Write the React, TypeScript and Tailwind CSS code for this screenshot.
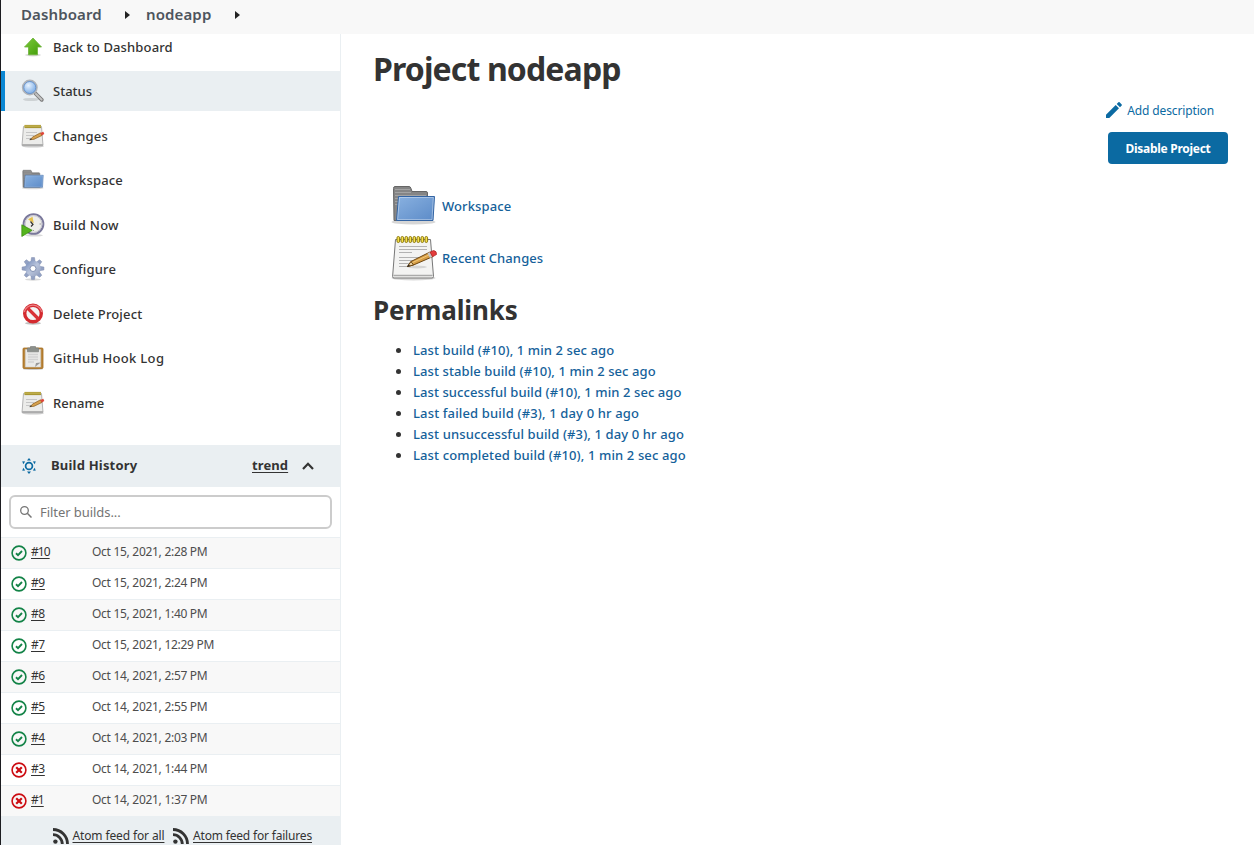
import React from "react";

type IconProps = { className?: string };

function UpArrow() {
  return (
    <svg width="24" height="24" viewBox="0 0 24 24">
      <defs>
        <linearGradient id="upg" x1="0" y1="0" x2="1" y2="1"><stop offset="0" stopColor="#7dcb3c" /><stop offset="1" stopColor="#3f9a06" /></linearGradient>
      </defs>
      <ellipse cx="12" cy="20" rx="8" ry="1.500" fill="#000" opacity=".14" />
      <path d="M12 3 20.500 12H16.500V19.800H7.500V12H3.500Z" fill="url(#upg)" stroke="#6db33a" strokeWidth=".8" />
    </svg>
  );
}

function Magnifier() {
  return (
    <svg width="24" height="24" viewBox="0 0 24 24">
      <defs><radialGradient id="lens" cx=".4" cy=".35"><stop offset="0" stopColor="#e8f3ff" /><stop offset="1" stopColor="#8fb9ea" /></radialGradient></defs>
      <ellipse cx="10" cy="20.500" rx="8" ry="1.600" fill="#000" opacity=".12" />
      <path d="M14.500 14.500 20.800 20.800" stroke="#7b7b7b" strokeWidth="3.800" strokeLinecap="round" />
      <path d="M15 15 20.600 20.600" stroke="#c4c4c4" strokeWidth="2" strokeLinecap="round" />
      <circle cx="8.800" cy="8.500" r="7" fill="url(#lens)" stroke="#b0b3b8" strokeWidth="1.900" />
      <circle cx="8.800" cy="8.500" r="6" fill="none" stroke="#5d8fce" strokeWidth=".9" />
    </svg>
  );
}

function Notepad({ size = 24 }: { size?: number }) {
  const small = size < 30;
  return small ? (
    <svg width="24" height="24" viewBox="0 0 24 24">
      <ellipse cx="12" cy="22.300" rx="11" ry="1.200" fill="#000" opacity=".2" />
      <path d="M2.500 2.500H20.500L22 21.500H1Z" fill="#ececea" stroke="#b4b4b4" />
      <path d="M1.200 20.800H21.800" stroke="#999" />
      <path d="M3.500 2.500H20" stroke="#a18e2b" strokeWidth="3.200" />
      <path d="M3.500 2.300H20" stroke="#d9ca68" strokeWidth="2" strokeDasharray="1 1" />
      <path d="M5 8.500H16M5 11.500H13M5 14.500H10" stroke="#c6c6c6" />
      <path d="M9 15.700 12 12.800 19.500 8.800 21 11.400 13 15.300Z" fill="#d6a04c" stroke="#875b1e" strokeWidth=".7" />
      <path d="M19.200 8.900 22.300 7.700 23.300 10 20.800 11.500Z" fill="#de4539" />
      <path d="M8 16.200 11 15.200 10 14.200Z" fill="#333" />
    </svg>
  ) : (
    <svg width="48" height="48" viewBox="0 0 48 48">
      <ellipse cx="23.500" cy="44" rx="22" ry="2.500" fill="#000" opacity=".15" />
      <path d="M5.500 5.500H40.500L43.500 42.500Q43.500 44 42 44H4Q2.500 44 2.600 42.500Z" fill="#f3f3f2" stroke="#777" />
      <path d="M3.500 41.500H42.500" stroke="#aaa" strokeWidth="1.500" />
      <path d="M9 12.500H37M9 15.500H37M9 18.500H22M9 23.500H35M9 26.500H28M9 29.500H23M9 32.500H18" stroke="#b2b2b2" />
      {[8.500, 12.500, 16.500, 20.500, 24.500, 28.500, 32.500, 36.500].map((x) => (
        <rect key={x} x={x - 1.500} y="2.500" width="2.600" height="6" rx="1.300" fill="#f7e04a" stroke="#8c7a10" />
      ))}
      <ellipse cx="27" cy="33" rx="10" ry="1.500" fill="#000" opacity=".12" />
      <path d="M17.500 32.500 21 27.500 40 18 43 22.500 23.500 31Z" fill="#d79e45" stroke="#6d4610" />
      <path d="M21.500 29 41 20" stroke="#f0c879" />
      <path d="M17.500 32.500 21 27.500 23.500 31Z" fill="#eed3a4" stroke="#6d4610" />
      <path d="M17 33 18.700 30.500 20 32Z" fill="#222" />
      <path d="M37.500 19.200 40 18 42.500 22.800 40 24Z" fill="#c7c7c7" />
      <path d="M40 18 43.500 16.500Q47 17 46.500 20.500L42.500 22.800Z" fill="#e33c3c" stroke="#a22" strokeWidth=".7" />
    </svg>
  );
}

function Folder({ size = 24 }: { size?: number }) {
  return (
    <svg width={size} height={size} viewBox="0 0 48 48">
      <defs><linearGradient id="fold" x1="0" y1="0" x2="1" y2="1"><stop offset="0" stopColor="#89b1e0" /><stop offset="1" stopColor="#5c8bc8" /></linearGradient></defs>
      <ellipse cx="23.500" cy="40" rx="22" ry="2.500" fill="#000" opacity=".16" />
      <path d="M3.500 6.500Q3.500 4.500 5 4.500H19Q20.500 4.500 21 6.500L22 9.500H36Q37.500 9.500 37.500 11V38.500H4Z" fill="#858585" stroke="#666" />
      <path d="M5 7.500H20M5 10.500H21M5 13.500H36M5 16.500H8M5 19.500H8M5 22.500H8" stroke="#a3a3a3" />
      <path d="M8.500 14.500H44.500L43 38.500H6.500Z" fill="url(#fold)" stroke="#3465a4" />
      <path d="M9.500 15.500H43.300L42 37.500H7.600Z" fill="none" stroke="#fff" opacity=".35" />
    </svg>
  );
}

function BuildClock() {
  return (
    <svg width="24" height="24" viewBox="0 0 24 24">
      <ellipse cx="13" cy="22.300" rx="9" ry="1.200" fill="#000" opacity=".15" />
      <circle cx="12.500" cy="11" r="9.900" fill="#eeeeea" stroke="#7a789b" strokeWidth="1.900" />
      <circle cx="12.500" cy="11" r="8.400" fill="none" stroke="#c4c4ce" />
      <path d="M12.800 10.500 7 6.200 11.500 3.800Z" fill="#e6c14c" />
      <path d="M9.500 8.500 12 11.500 10 13.500" stroke="#333" strokeWidth="1.200" fill="none" />
      <path d="M20 11H18.500M12.500 18V17" stroke="#999" />
      <path d="M.8 11.800 11.200 17.300.8 23.500Z" fill="#54b41e" stroke="#378808" strokeWidth=".7" />
    </svg>
  );
}

function Gear() {
  return (
    <svg width="24" height="24" viewBox="0 0 24 24">
      <defs><linearGradient id="gear" x1="0" y1="0" x2="1" y2="1"><stop offset="0" stopColor="#7189b8" /><stop offset=".5" stopColor="#b9c4dc" /><stop offset="1" stopColor="#8f9cbb" /></linearGradient></defs>
      <ellipse cx="12" cy="22.500" rx="8" ry="1.200" fill="#000" opacity=".15" />
      <g fill="url(#gear)">
        {[0, 45, 90, 135, 180, 225, 270, 315].map((a) => (
          <path key={a} d="M9.800 5.500 10.500.6H13.500L14.200 5.500Z" fill="#93a2c4" stroke="#7c89ac" strokeWidth=".5" transform={`rotate(${a} 12 11.500)`} />
        ))}
        <circle cx="12" cy="11.500" r="7.800" />
      </g>
      <circle cx="12" cy="11.500" r="3" fill="#fff" stroke="#8290b2" />
    </svg>
  );
}

function NoEntry() {
  return (
    <svg width="24" height="24" viewBox="0 0 24 24">
      <ellipse cx="12" cy="21.300" rx="8" ry="1.500" fill="#000" opacity=".25" />
      <circle cx="12" cy="11.500" r="8.300" fill="#f4f4f4" stroke="#d42a2f" strokeWidth="3.400" />
      <path d="M6.500 6 17.500 17" stroke="#d93237" strokeWidth="3.200" />
      <path d="M3.400 10A8.800 8.800 0 0 1 20.600 10" fill="none" stroke="#ec8185" strokeWidth="1.200" />
    </svg>
  );
}

function Clipboard() {
  return (
    <svg width="24" height="24" viewBox="0 0 24 24">
      <ellipse cx="12" cy="23" rx="10" ry="1" fill="#000" opacity=".2" />
      <rect x="2" y="2" width="20" height="20.500" rx="1" fill="#b98438" stroke="#a36d20" strokeWidth=".8" />
      <path d="M4.300 3.500H19.700V21H4.300Z" fill="#eaeae8" stroke="#ccc" strokeWidth=".5" />
      <path d="M7 8.500H17M7 11H17M7 13.500H17M7 16H13" stroke="#d2d2d2" strokeWidth="1.300" />
      <path d="M14 21 15 17 19.700 16.500Z" fill="#999" />
      <path d="M6.500 2H9.500V.5H14.500V2H17.500V5.800H6.500Z" fill="#8c908c" stroke="#737773" strokeWidth=".6" />
    </svg>
  );
}

function Weather() {
  return (
    <svg width="16" height="16" viewBox="0 0 16 16" fill="none" stroke="#0b6aa2">
      <circle cx="8" cy="8" r="3.400" strokeWidth="1.700" />
      <path d="M8 0 10 2.500H6ZM8 16 10 13.500H6ZM1.300 3.200 4.200 3.500 2.200 6.200ZM14.700 3.200 11.800 3.500 13.800 6.200ZM1.300 12.800 4.200 12.500 2.200 9.800ZM14.700 12.800 11.800 12.500 13.800 9.800Z" fill="#0b6aa2" stroke="none" />
    </svg>
  );
}

function StatusIcon({ ok }: { ok: boolean }) {
  const c = ok ? "#138347" : "#cc0c12";
  return (
    <svg className="shrink-0" width="16" height="16" viewBox="0 0 16 16" fill="none" stroke={c}>
      <circle cx="8" cy="8" r="6.900" strokeWidth="1.600" />
      {ok ? <path d="M5 8.200 7 10.100 11 6" strokeWidth="1.900" /> : <path d="M5.200 5.200 10.800 10.800M10.800 5.200 5.200 10.800" strokeWidth="2.200" />}
    </svg>
  );
}

function Rss() {
  return (
    <svg className="shrink-0" width="16" height="16" viewBox="0 0 16 16" fill="none" stroke="#333">
      <circle cx="2.400" cy="13.600" r="2.200" fill="#333" stroke="none" />
      <path d="M0 6.700A9.300 9.300 0 0 1 9.300 16M0 1.500A14.500 14.500 0 0 1 14.500 16" strokeWidth="2.800" />
    </svg>
  );
}

function Pencil({ className }: IconProps) {
  return (
    <svg className={className} width="16" height="16" viewBox="0 0 16 16" fill="#0b6aa2">
      <path d="M0 12.700V16H3.300L13 6.300 9.700 3ZM15.700 3.600Q16.200 3 15.700 2.400L13.600.3Q13 -.2 12.400.3L10.700 2 14 5.300Z" />
    </svg>
  );
}

const tasks: [string, React.ReactNode, string][] = [
  ["Back to Dashboard", <UpArrow />, "tracking-[0.14px]"],
  ["Status", <Magnifier />, "tracking-[0px]"],
  ["Changes", <Notepad />, "tracking-[0.15px]"],
  ["Workspace", <Folder />, "tracking-[0.18px]"],
  ["Build Now", <BuildClock />, "tracking-[0.28px]"],
  ["Configure", <Gear />, "tracking-[0.2px]"],
  ["Delete Project", <NoEntry />, "tracking-[0.15px]"],
  ["GitHub Hook Log", <Clipboard />, "tracking-[0.32px]"],
  ["Rename", <Notepad />, "tracking-[0.05px]"],
];

const builds: [string, string, boolean][] = [
  ["#10", "Oct 15, 2021, 2:28 PM", true],
  ["#9", "Oct 15, 2021, 2:24 PM", true],
  ["#8", "Oct 15, 2021, 1:40 PM", true],
  ["#7", "Oct 15, 2021, 12:29 PM", true],
  ["#6", "Oct 14, 2021, 2:57 PM", true],
  ["#5", "Oct 14, 2021, 2:55 PM", true],
  ["#4", "Oct 14, 2021, 2:03 PM", true],
  ["#3", "Oct 14, 2021, 1:44 PM", false],
  ["#1", "Oct 14, 2021, 1:37 PM", false],
];

const permalinks: [string, string][] = [
  ["Last build (#10), 1 min 2 sec ago", "tracking-[0.1px]"],
  ["Last stable build (#10), 1 min 2 sec ago", "tracking-[0.09px]"],
  ["Last successful build (#10), 1 min 2 sec ago", "tracking-[0.08px]"],
  ["Last failed build (#3), 1 day 0 hr ago", "tracking-[0.15px]"],
  ["Last unsuccessful build (#3), 1 day 0 hr ago", "tracking-[0.12px]"],
  ["Last completed build (#10), 1 min 2 sec ago", "tracking-[0.12px]"],
];

function Caret() {
  return <svg width="5" height="8" viewBox="0 0 5 8"><path d="M0 0 5 4 0 8Z" fill="#222" /></svg>;
}

export default function App() {
  return (
    <div className="flex h-[845px] w-[1254px] flex-col overflow-hidden border-l border-[#1c1c20] bg-white font-['Noto_Sans',sans-serif] text-[#333]">
      <header className="flex h-[34px] shrink-0 items-center bg-[#f8f8f8] pb-[5px] pl-[20px] text-[15px] font-semibold tracking-[0.12px] whitespace-nowrap text-[#4d545d]">
        <span className="w-[104px]">Dashboard</span>
        <Caret />
        <span className="ml-[16px] w-[89px]">nodeapp</span>
        <Caret />
      </header>
      <div className="flex min-h-0 flex-1">
        <aside className="flex w-[340px] shrink-0 flex-col border-r border-[#eaeff2]">
          <nav className="-mt-[7.5px] flex h-[418.5px] shrink-0 flex-col gap-[4.5px]">
            {tasks.map(([label, icon, tracking], i) => (
              <div key={label} className={i === 1 ? "flex h-10 shrink-0 items-center border-l-4 border-[#0b87d3] bg-[#eaeff2] pl-4" : "flex h-10 shrink-0 items-center pl-5"}>
                {icon}
                <span className={`ml-2 pt-[2px] text-[13px] font-medium whitespace-nowrap ${tracking}`}>{label}</span>
              </div>
            ))}
          </nav>
          <div className="flex h-[42px] shrink-0 items-center bg-[#eaeff2] pl-5 text-[13px] font-bold">
            <Weather />
            <span className="ml-[14px] w-[201px] tracking-[0.2px]">Build History</span>
            <span className="w-[50px] tracking-[0.1px] underline underline-offset-2">trend</span>
            <svg width="12" height="8" viewBox="0 0 12 8" fill="none" stroke="#333" strokeWidth="2.200"><path d="M1 7 6 1.800 11 7" /></svg>
          </div>
          <div className="h-[50px] shrink-0 px-2 pt-2">
            <div className="flex h-[34px] items-center rounded-md border-2 border-[#ccc] pl-[9px] text-[13px] text-[#757575]">
              <svg width="12" height="12" viewBox="0 0 12 12" fill="none" stroke="#777"><circle cx="4.500" cy="4.500" r="3.800" strokeWidth="1.300" /><path d="M7.300 7.300 11.500 11.500" strokeWidth="1.500" /></svg>
              <span className="ml-2 pt-[2px] tracking-[-0.06px]">Filter builds...</span>
            </div>
          </div>
          <div>
            {builds.map(([num, date, ok], i) => (
              <div key={num} className={i % 2 ? "flex h-[31px] items-center border-t border-[#eaeff2] pl-[10px] text-[12px]" : "flex h-[31px] items-center border-t border-[#eaeff2] bg-[#f8f8f8] pl-[10px] text-[12px]"}>
                <StatusIcon ok={ok} />
                <span className="ml-1 w-[61px] pb-[2px]"><span className={num.includes("1") ? "tracking-[-0.95px] underline underline-offset-2" : "tracking-[-0.4px] underline underline-offset-2"}>{num}</span></span>
                <span className="pb-[2px] tracking-[-0.29px] text-[#4d4d4d]">{date}</span>
              </div>
            ))}
          </div>
          <div className="flex h-[40px] shrink-0 items-center bg-[#eaeff2] pl-[52px] text-[12px] whitespace-nowrap">
            <Rss />
            <span className="ml-[3.5px] w-[100.5px] tracking-[-0.13px]"><span className="underline underline-offset-2">Atom feed for all</span></span>
            <Rss />
            <span className="ml-1 tracking-[-0.18px] underline underline-offset-2">Atom feed for failures</span>
          </div>
        </aside>
        <main className="flex flex-1 flex-col pl-8">
          <h1 className="mt-[14px] h-[42px] text-[32px] leading-[42px] font-bold tracking-[-0.87px]">Project nodeapp</h1>
          <div className="mt-[10px] flex flex-col items-end pr-[26px] text-[#0b6aa2]">
            <div className="mr-[14px] flex h-[22px] items-center text-[12px] tracking-[-0.14px]"><Pencil className="mr-[5px] mb-[2px]" /><span>Add description</span></div>
            <button className="mt-[10px] h-8 w-[120px] rounded bg-[#0b6aa2] pt-[2px] text-[12px] font-bold tracking-[-0.28px] text-white">Disable Project</button>
          </div>
          <div className="mt-[18px] ml-[17px] flex flex-col gap-1 text-[13px] font-medium tracking-[0.1px] text-[#15619a]">
            <div className="flex h-12 items-center"><Folder size={48} /><span className="ml-1 pt-[2px]">Workspace</span></div>
            <div className="flex h-12 items-center"><Notepad size={48} /><span className="ml-1 pt-[2px]">Recent Changes</span></div>
          </div>
          <h2 className="mt-[9px] h-[38px] text-[26px] leading-[38px] font-bold tracking-[-0.1px]">Permalinks</h2>
          <ul className="mt-[11px] ml-[23px] text-[13px] leading-[21px] font-medium text-[#15619a]">
            {permalinks.map(([text, tracking]) => (
              <li key={text} className={`flex h-[21px] items-center ${tracking}`}><span className="mr-[12px] h-[5px] w-[5px] rounded-full bg-[#333]" />{text}</li>
            ))}
          </ul>
        </main>
      </div>
    </div>
  );
}
